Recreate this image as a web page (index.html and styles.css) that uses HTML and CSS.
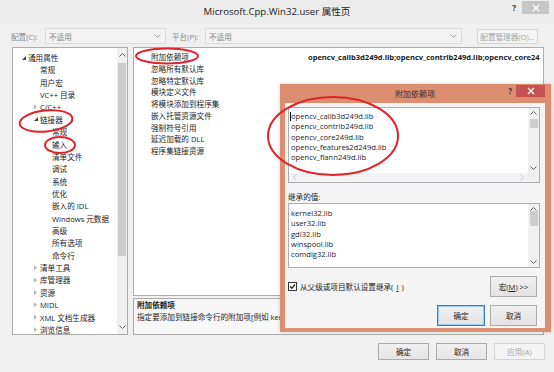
FILE: index.html
```html
<!DOCTYPE html>
<html>
<head>
  <meta charset="utf-8" />
  <title>Microsoft.Cpp.Win32.user 属性页</title>
  <link rel="stylesheet" href="styles.css">
</head>
<body>
<div class="window">
  <div class="titlebar">
    <div></div>
    <div class="title">Microsoft.Cpp.Win32.user 属性页</div>
    <div class="caption-btns">
      <span class="help">?</span>
      <span class="close close-gray">
        <svg width="8" height="8" viewBox="0 0 8 8"><path d="M1 1 L7 7 M7 1 L1 7" stroke="#fff" stroke-width="1.4"/></svg>
      </span>
    </div>
  </div>

  <div class="config-row">
    <span class="cfg-label l-conf">配置(C):</span>
    <div class="combo combo-conf">
      <span>不适用</span>
      <svg width="7" height="4" viewBox="0 0 7 4"><path d="M0.5 0.5 L3.5 3.5 L6.5 0.5" fill="none" stroke="#a8a8a8"/></svg>
    </div>
    <span class="cfg-label l-plat">平台(P):</span>
    <div class="combo combo-plat">
      <span>不适用</span>
      <svg width="7" height="4" viewBox="0 0 7 4"><path d="M0.5 0.5 L3.5 3.5 L6.5 0.5" fill="none" stroke="#a8a8a8"/></svg>
    </div>
    <div class="btn btn-disabled btn-mgr">配置管理器(O)...</div>
  </div>

  <div class="panels">
    <div class="tree">
      <div class="tree-list">
        <div class="node l1"><i class="tw open"></i>通用属性</div>
        <div class="node l2">常规</div>
        <div class="node l2">用户宏</div>
        <div class="node l2">VC++ 目录</div>
        <div class="node l2x"><i class="tw shut"></i>C/C++</div>
        <div class="node l2x"><i class="tw open"></i>链接器</div>
        <div class="node l3">常规</div>
        <div class="node l3">输入</div>
        <div class="node l3">清单文件</div>
        <div class="node l3">调试</div>
        <div class="node l3">系统</div>
        <div class="node l3">优化</div>
        <div class="node l3">嵌入的 IDL</div>
        <div class="node l3">Windows 元数据</div>
        <div class="node l3">高级</div>
        <div class="node l3">所有选项</div>
        <div class="node l3">命令行</div>
        <div class="node l2x"><i class="tw shut"></i>清单工具</div>
        <div class="node l2x"><i class="tw shut"></i>库管理器</div>
        <div class="node l2x"><i class="tw shut"></i>资源</div>
        <div class="node l2x"><i class="tw shut"></i>MIDL</div>
        <div class="node l2x"><i class="tw shut"></i>XML 文档生成器</div>
        <div class="node l2x"><i class="tw shut"></i>浏览信息</div>
      </div>
      <div class="vscroll tree-scroll">
        <span class="arrow"><svg width="7" height="4" viewBox="0 0 7 4"><path d="M0.5 3.5 L3.5 0.5 L6.5 3.5" fill="none" stroke="#606060"/></svg></span>
        <span class="thumb"></span>
        <span class="track"></span>
        <span class="arrow"><svg width="7" height="4" viewBox="0 0 7 4"><path d="M0.5 0.5 L3.5 3.5 L6.5 0.5" fill="none" stroke="#606060"/></svg></span>
      </div>
    </div>

    <div class="right">
      <div class="grid">
        <div class="row"><span class="name">附加依赖项</span><span class="value">opencv_calib3d249d.lib;opencv_contrib249d.lib;opencv_core24</span></div>
        <div class="row"><span class="name">忽略所有默认库</span><span class="value"></span></div>
        <div class="row"><span class="name">忽略特定默认库</span><span class="value"></span></div>
        <div class="row"><span class="name">模块定义文件</span><span class="value"></span></div>
        <div class="row"><span class="name">将模块添加到程序集</span><span class="value"></span></div>
        <div class="row"><span class="name">嵌入托管资源文件</span><span class="value"></span></div>
        <div class="row"><span class="name">强制符号引用</span><span class="value"></span></div>
        <div class="row"><span class="name">延迟加载的 DLL</span><span class="value"></span></div>
        <div class="row"><span class="name">程序集链接资源</span><span class="value"></span></div>
      </div>
      <div class="desc">
        <div class="desc-title">附加依赖项</div>
        <div class="desc-text">指定要添加到链接命令行的附加项[例如 kernel32.lib]</div>
      </div>
    </div>
  </div>

  <div class="footer">
    <div class="btn btn-main">确定</div>
    <div class="btn btn-main">取消</div>
    <div class="btn btn-main btn-disabled">应用(A)</div>
  </div>

  <!-- nested modal dialog, floats over the property page -->
  <div class="dialog">
    <div class="dlg-titlebar">
      <div></div>
      <div class="dlg-title">附加依赖项</div>
      <div class="caption-btns dlg-caption">
        <span class="help">?</span>
        <span class="close close-red">
          <svg width="8" height="8" viewBox="0 0 8 8"><path d="M1 1 L7 7 M7 1 L1 7" stroke="#fff" stroke-width="1.4"/></svg>
        </span>
      </div>
    </div>
    <div class="dlg-client">
      <div class="listbox edit-box">
        <div class="lines">
          <div class="line"><span class="caret"></span>opencv_calib3d249d.lib</div>
          <div class="line">opencv_contrib249d.lib</div>
          <div class="line">opencv_core249d.lib</div>
          <div class="line">opencv_features2d249d.lib</div>
          <div class="line">opencv_flann249d.lib</div>
        </div>
        <div class="vscroll box-scroll">
          <span class="arrow"><svg width="7" height="4" viewBox="0 0 7 4"><path d="M0.5 3.5 L3.5 0.5 L6.5 3.5" fill="none" stroke="#606060"/></svg></span>
          <span class="thumb thumb-edit"></span>
          <span class="track"></span>
          <span class="arrow"><svg width="7" height="4" viewBox="0 0 7 4"><path d="M0.5 0.5 L3.5 3.5 L6.5 0.5" fill="none" stroke="#606060"/></svg></span>
        </div>
        <div class="hscroll">
          <svg width="4" height="7" viewBox="0 0 4 7"><path d="M3.5 0.5 L0.5 3.5 L3.5 6.5" fill="none" stroke="#c4c4c4"/></svg>
          <svg width="4" height="7" viewBox="0 0 4 7"><path d="M0.5 0.5 L3.5 3.5 L0.5 6.5" fill="none" stroke="#c4c4c4"/></svg>
        </div>
        <div class="corner"></div>
      </div>

      <div class="inherit-label">继承的值:</div>

      <div class="listbox inherit-box">
        <div class="lines">
          <div class="line">kernel32.lib</div>
          <div class="line">user32.lib</div>
          <div class="line">gdi32.lib</div>
          <div class="line">winspool.lib</div>
          <div class="line">comdlg32.lib</div>
        </div>
        <div class="vscroll box-scroll">
          <span class="arrow"><svg width="7" height="4" viewBox="0 0 7 4"><path d="M0.5 3.5 L3.5 0.5 L6.5 3.5" fill="none" stroke="#606060"/></svg></span>
          <span class="thumb thumb-inherit"></span>
          <span class="track"></span>
          <span class="arrow"><svg width="7" height="4" viewBox="0 0 7 4"><path d="M0.5 0.5 L3.5 3.5 L6.5 0.5" fill="none" stroke="#606060"/></svg></span>
        </div>
      </div>

      <div class="check-row">
        <label class="check">
          <span class="box">
            <svg width="7" height="7" viewBox="0 0 7 7"><path d="M1 3.5 L2.8 5.3 L6 1.5" fill="none" stroke="#222" stroke-width="1.3"/></svg>
          </span>
          从父级或项目默认设置继承(<u>I</u>)
        </label>
        <div class="btn btn-dlg btn-macro">宏(<u>M</u>)&nbsp;&gt;&gt;</div>
      </div>

      <div class="dlg-buttons">
        <div class="btn btn-dlg btn-default">确定</div>
        <div class="btn btn-dlg">取消</div>
      </div>
    </div>
  </div>

  <!-- red hand-drawn annotation rings -->
  <svg class="marks" width="554" height="372" viewBox="0 0 554 372">
    <ellipse cx="167" cy="56" rx="31" ry="7.5" />
    <ellipse cx="46" cy="121" rx="26.5" ry="10.5" transform="rotate(-6 46 121)" />
    <ellipse cx="60" cy="145" rx="15" ry="8" />
    <ellipse cx="333" cy="136" rx="65" ry="39" />
  </svg>
</div>
</body>
</html>
```

FILE: styles.css
```css
body {
  margin: 0;
  padding: 0;
  font-family: "Open Sans", "Noto Sans CJK SC", sans-serif;
  font-size: 7.6px;
  color: #1b1b1b;
}
.window {
  position: relative;
  width: 554px;
  height: 372px;
  background: #f0f0f0;
  overflow: hidden;
  display: flex;
  flex-direction: column;
}

/* title bar */
.titlebar {
  height: 24px;
  display: grid;
  grid-template-columns: 60px 1fr 60px;
  align-items: start;
  background: #ececec;
}
.title {
  font-size: 9.6px;
  color: #222;
  text-align: center;
  line-height: 24px;
}
.caption-btns {
  display: flex;
  justify-content: flex-end;
  align-items: flex-start;
  padding-right: 5px;
  padding-top: 1px;
  gap: 6px;
}
.help {
  font-size: 8px;
  font-weight: 700;
  color: #333;
  line-height: 13px;
}
.close {
  width: 27px;
  height: 13px;
  display: flex;
  align-items: center;
  justify-content: center;
}
.close-gray { background: #c6c6c6; }
.close-red { background: #c75050; width: 29px; height: 12px; }

/* configuration row */
.config-row {
  display: flex;
  align-items: center;
  margin-top: 4px;
  height: 16px;
  padding-left: 11px;
}
.cfg-label {
  color: #8a8a8a;
  white-space: nowrap;
}
.l-conf { width: 34px; }
.l-plat { width: 33px; margin-left: 6px; }
.combo {
  height: 16px;
  box-sizing: border-box;
  border: 1px solid #d9d9d9;
  background: #f3f3f3;
  color: #858585;
  display: flex;
  align-items: center;
  justify-content: space-between;
  padding: 0 4px 0 3px;
}
.combo-conf { width: 121px; }
.combo-plat { width: 257px; }

.btn {
  box-sizing: border-box;
  border: 1px solid #acacac;
  background: linear-gradient(#f0f0f0, #e5e5e5);
  display: flex;
  align-items: center;
  justify-content: center;
  white-space: nowrap;
  color: #1b1b1b;
}
.btn-disabled {
  border-color: #d5d5d5;
  background: #f4f4f4;
  color: #a3a3a3;
}
.btn-mgr {
  width: 61px;
  height: 15px;
  margin-left: 15px;
}

/* tree + property grid */
.panels {
  display: flex;
  gap: 5px;
  margin-top: 3px;
  height: 288px;
  padding-left: 12px;
}
.tree {
  width: 116px;
  box-sizing: border-box;
  border: 1px solid #acacac;
  background: #fff;
  display: flex;
  overflow: hidden;
}
.tree-list {
  flex: 1;
  padding-top: 4px;
  overflow: hidden;
}
.node {
  height: 12.36px;
  line-height: 12.36px;
  white-space: nowrap;
  display: flex;
  align-items: center;
}
.l1 { padding-left: 8px; }
.l2 { padding-left: 27px; }
.l2x { padding-left: 20px; }
.l3 { padding-left: 39px; }
.tw {
  width: 7px;
  height: 7px;
  display: inline-block;
  position: relative;
}
.tw.open::before {
  content: "";
  position: absolute;
  left: 1px;
  top: 1px;
  border-style: solid;
  border-width: 0 0 4px 4px;
  border-color: transparent transparent #404040 transparent;
}
.tw.shut::before {
  content: "";
  position: absolute;
  left: 1px;
  top: 0.5px;
  width: 3px;
  height: 5px;
  clip-path: polygon(0 0, 100% 50%, 0 100%);
  background: #b4b4b4;
}

.vscroll {
  width: 10px;
  display: flex;
  flex-direction: column;
  align-items: center;
  background: #f0f0f0;
}
.vscroll .arrow {
  height: 10px;
  width: 100%;
  display: flex;
  align-items: center;
  justify-content: center;
}
.vscroll .thumb {
  width: 8px;
  background: #cdcdcd;
}
.vscroll .track { flex: 1; }
.tree-scroll { padding: 2px 0 2px; }
.tree-scroll .thumb { margin-top: 3px; height: 193px; }

.right {
  width: 411px;
  display: flex;
  flex-direction: column;
  gap: 2px;
}
.grid {
  height: 249px;
  box-sizing: border-box;
  border: 1px solid #acacac;
  background: #fff;
  padding-top: 4px;
  overflow: hidden;
}
.row {
  display: grid;
  grid-template-columns: 174px 1fr;
  height: 11.75px;
  line-height: 11.75px;
  white-space: nowrap;
}
.row .name { padding-left: 17px; }
.row .value {
  font-weight: 700;
  letter-spacing: -0.04px;
}
.desc {
  height: 37px;
  box-sizing: border-box;
  border: 1px solid #acacac;
  background: #f7f7f7;
  padding: 0 3px;
  line-height: 12px;
  white-space: nowrap;
  overflow: hidden;
}
.desc-title { font-weight: 700; }

.footer {
  display: flex;
  justify-content: flex-end;
  gap: 7px;
  margin-top: 8px;
  padding-right: 9px;
}
.btn-main {
  width: 51px;
  height: 17px;
}

/* nested dialog */
.dialog {
  position: absolute;
  left: 280px;
  top: 84px;
  width: 271px;
  height: 248px;
  box-sizing: border-box;
  background: #dc8e70;
  padding: 0 6px 4px 5px;
  display: flex;
  flex-direction: column;
  box-shadow: 0 0 4px rgba(0,0,0,0.18);
}
.dlg-titlebar {
  height: 19px;
  display: grid;
  grid-template-columns: 50px 1fr 50px;
  align-items: start;
}
.dlg-title {
  font-size: 8px;
  color: #3a2a24;
  text-align: center;
  line-height: 19px;
}
.dlg-caption {
  padding-right: 0;
  padding-top: 1px;
  gap: 4px;
}
.dlg-caption .help { line-height: 12px; }
.dlg-client {
  flex: 1;
  background: #f4f4f4;
  padding: 4px 5px 1px 3px;
  display: flex;
  flex-direction: column;
}
.listbox {
  box-sizing: border-box;
  border: 1px solid #abadb3;
  background: #fff;
  display: grid;
  grid-template-columns: 1fr 11px;
}
.edit-box {
  height: 76px;
  grid-template-rows: 1fr 9px;
}
.inherit-box {
  height: 65px;
}
.lines {
  padding: 3px 0 0 1px;
  overflow: hidden;
}
.inherit-box .lines { padding-top: 4px; }
.line {
  height: 10.25px;
  line-height: 10.25px;
  white-space: nowrap;
  position: relative;
  padding-left: 1px;
}
.caret {
  position: absolute;
  left: 0;
  top: 1px;
  width: 1px;
  height: 9px;
  background: #000;
}
.box-scroll {
  width: 11px;
  background: #f0f0f0;
}
.thumb-edit { margin-top: 1px; height: 9px; }
.thumb-inherit { margin-top: -2px; height: 15px; }
.inherit-box .box-scroll .arrow:first-child { height: 9px; }
.hscroll {
  background: #f3f3f3;
  display: flex;
  align-items: center;
  justify-content: space-between;
  padding: 0 4px;
}
.corner { background: #f0f0f0; }

.inherit-label {
  height: 12px;
  line-height: 12px;
  margin-top: 8px;
}
.check-row {
  display: flex;
  align-items: center;
  justify-content: space-between;
  margin-top: 8px;
  height: 21px;
}
.check {
  display: flex;
  align-items: center;
  gap: 3px;
}
.check .box {
  width: 9px;
  height: 9px;
  box-sizing: border-box;
  border: 1px solid #333;
  background: #fff;
  display: flex;
  align-items: center;
  justify-content: center;
}
.btn-dlg {
  width: 47px;
  height: 21px;
  background: linear-gradient(#f0f0f0, #e3e3e3);
}
.btn-macro { margin-right: 3px; }
.dlg-buttons {
  display: flex;
  justify-content: flex-end;
  gap: 5px;
  margin-top: 8px;
  padding-right: 3px;
}
.btn-default {
  width: 48px;
  border-color: #3c7fb1;
  box-shadow: inset 0 0 0 1px #9ccbee;
}

/* annotation overlay */
.marks {
  position: absolute;
  left: 0;
  top: 0;
  pointer-events: none;
}
.marks ellipse {
  fill: none;
  stroke: #e0222b;
  stroke-width: 2;
}
```
